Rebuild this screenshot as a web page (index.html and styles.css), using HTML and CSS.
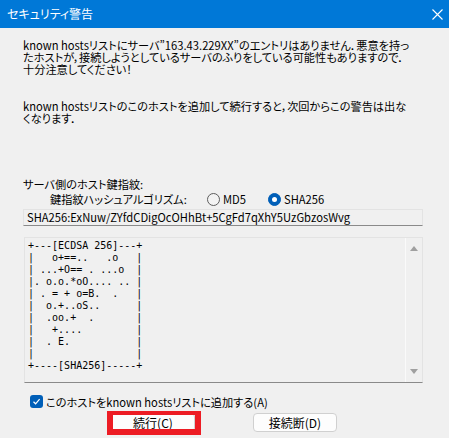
FILE: index.html
```html
<!DOCTYPE html>
<html lang="ja">
<head>
    <meta charset="UTF-8">
    <title>セキュリティ警告</title>
    <link rel="stylesheet" href="styles.css">
</head>
<body>
    <div class="dialog">
        <header class="titlebar">
            <span class="title">セキュリティ警告</span>
            <svg class="close" width="11" height="11" viewBox="0 0 11 11">
                <path d="M0.5 0.5 L10.5 10.5 M10.5 0.5 L0.5 10.5" stroke="#ffffff" stroke-width="1.1" fill="none"/>
            </svg>
        </header>

        <div class="content">
            <p class="message first">known hostsリストにサーバ”163.43.229XX”のエントリはありません．悪意を持っ<br>たホストが，接続しようとしているサーバのふりをしている可能性もありますので．<br>十分注意してください！</p>
            <p class="message second">known hostsリストのこのホストを追加して続行すると，次回からこの警告は出な<br>くなります．</p>

            <div class="fp-label">サーバ側のホスト鍵指紋:</div>
            <div class="algo-row">
                <span class="algo-label">鍵指紋ハッシュアルゴリズム:</span>
                <span class="radio"></span><span class="radio-text md5">MD5</span>
                <span class="radio checked"></span><span class="radio-text">SHA256</span>
            </div>
            <div class="fp-box">SHA256:ExNuw/ZYfdCDigOcOHhBt+5CgFd7qXhY5UzGbzosWvg</div>

            <div class="art-box">
<pre class="art">+---[ECDSA 256]---+
|   o+==..   .o   |
| ...+O== . ...o  |
|. o.o.*oO.... .. |
| . = + o=B.  .   |
|  o.+..oS..      |
|  .oo.+  .       |
|   +....         |
|  . E.           |
|                 |
+----[SHA256]-----+</pre>
                <div class="scrollbar">
                    <span class="arrow up"></span>
                    <span class="arrow down"></span>
                </div>
            </div>

            <label class="check-row">
                <span class="checkbox">
                    <svg width="9" height="9" viewBox="0 0 9 9">
                        <path d="M1.5 4.8 L3.6 6.8 L7.6 2.2" stroke="#ffffff" stroke-width="1.2" fill="none"/>
                    </svg>
                </span>
                <span>このホストをknown hostsリストに追加する(A)</span>
            </label>

            <div class="buttons">
                <button class="btn primary">続行(C)</button>
                <button class="btn">接続断(D)</button>
            </div>
        </div>
    </div>
</body>
</html>
```

FILE: styles.css
```css
:root {
    --title-blue: #0078d7;
    --dialog-bg: #f0f0f0;
    --accent: #005fb8;
    --text: #000000;
    --edge-light: #e3e3e3;
    --edge-dark: #8a8a8a;
    --mark-red: #ed1c24;
}

*,
*::before,
*::after {
    margin: 0;
    padding: 0;
    box-sizing: border-box;
}

body {
    background: var(--dialog-bg);
    font-family: "Noto Sans CJK JP", sans-serif;
    font-feature-settings: "palt";
    font-size: 11.2px;
    color: var(--text);
    width: 449px;
    height: 438px;
    overflow: hidden;
}

.titlebar {
    height: 28px;
    background: var(--title-blue);
    color: #ffffff;
    display: flex;
    align-items: center;
    justify-content: space-between;
    padding: 0 6px 0 7px;
}

.title {
    font-size: 12px;
    line-height: 12px;
}

.content {
    padding: 0 26px 0 23px;
}

.message {
    line-height: 12px;
    white-space: nowrap;
}

.message.first {
    margin-top: 11px;
}

.message.second {
    margin-top: 25px;
}

.fp-label {
    margin-top: 54px;
    line-height: 12px;
}

.algo-row {
    margin-top: 2px;
    height: 14px;
    display: flex;
    align-items: center;
    padding-left: 27px;
}

.algo-label {
    width: 157px;
}

.radio {
    width: 13px;
    height: 13px;
    border-radius: 50%;
    border: 1px solid #5d5d5d;
    background: #f3f3f3;
    display: flex;
    align-items: center;
    justify-content: center;
}

.radio.checked {
    border-color: var(--accent);
    background: var(--accent);
}

.radio.checked::after {
    content: "";
    width: 5px;
    height: 5px;
    border-radius: 50%;
    background: #ffffff;
}

.radio-text {
    margin-left: 3px;
}

.radio-text.md5 {
    width: 45px;
}

.fp-box {
    margin-top: 3px;
    height: 17px;
    border: 1px solid var(--edge-light);
    border-bottom-color: var(--edge-dark);
    padding: 0 3px;
    line-height: 15px;
    white-space: nowrap;
}

.art-box {
    margin: 11px 0 0 1px;
    height: 146px;
    border: 1px solid var(--edge-light);
    border-bottom-color: var(--edge-dark);
    display: flex;
}

.art {
    flex: 1;
    font-family: "DejaVu Sans Mono", monospace;
    font-size: 10px;
    line-height: 12px;
    padding: 2px 0 0 3px;
}

.scrollbar {
    width: 17px;
    border-left: 1px solid #fafafa;
    display: flex;
    flex-direction: column;
    justify-content: space-between;
    align-items: center;
    padding: 8px 0 8px;
}

.arrow {
    width: 0;
    height: 0;
    border-left: 4px solid transparent;
    border-right: 4px solid transparent;
}

.arrow.up {
    border-bottom: 5px solid #a0a0a0;
}

.arrow.down {
    border-top: 5px solid #a0a0a0;
}

.check-row {
    margin: 12px 0 0 7px;
    display: flex;
    align-items: center;
    gap: 3px;
    height: 13px;
    white-space: nowrap;
}

.checkbox {
    width: 13px;
    height: 13px;
    border-radius: 3px;
    background: var(--accent);
    display: flex;
    align-items: center;
    justify-content: center;
}

.buttons {
    margin-top: 5px;
    padding-left: 88px;
    display: flex;
    gap: 58px;
}

.btn {
    width: 84px;
    height: 19px;
    background: #fdfdfd;
    border: 1px solid #d0d0d0;
    border-radius: 4px;
    font-family: inherit;
    font-feature-settings: "palt";
    font-size: 12px;
    line-height: 15px;
    color: var(--text);
}

.btn.primary {
    position: relative;
}

/* red annotation frame drawn over the default button */
.btn.primary::after {
    content: "";
    position: absolute;
    top: -3px;
    left: -5px;
    width: 94px;
    height: 24px;
    border-style: solid;
    border-color: var(--mark-red);
    border-width: 4px 6px 6px 6px;
}
```
